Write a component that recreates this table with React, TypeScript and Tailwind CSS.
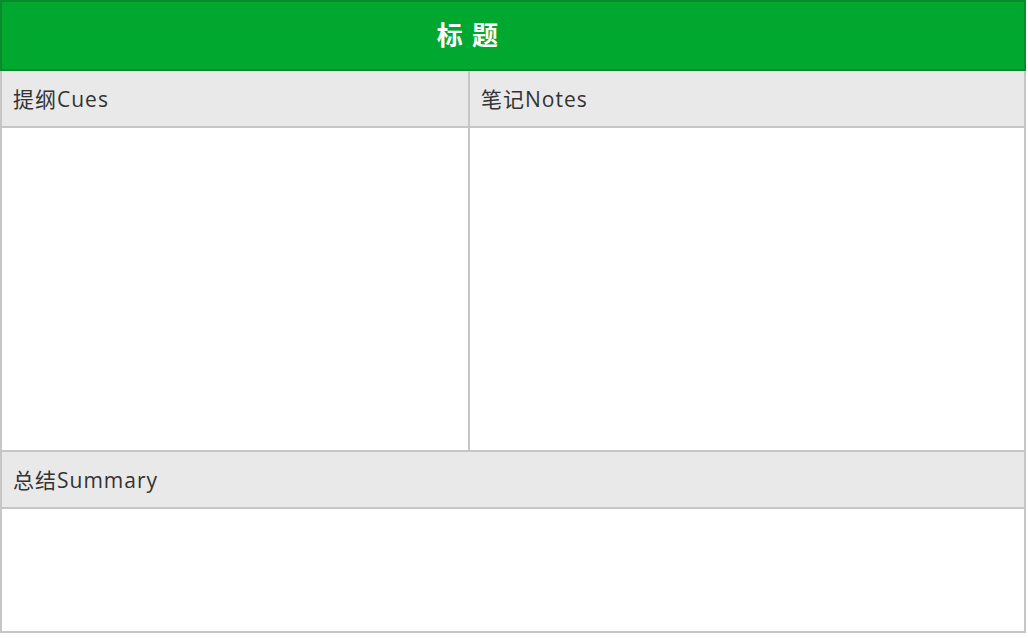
import React from 'react';

const font = { fontFamily: '"Open Sans", "Noto Sans CJK SC", sans-serif' };

const Cell: React.FC<{ label: string; bodyH: string; className?: string }> = ({ label, bodyH, className }) => (
  <div className={`flex flex-col ${className ?? ''}`}>
    <div className="h-[57px] bg-[#e9e9e9] border-b-2 border-[#c6c6c6] flex items-center px-[11px] pt-[2px] text-[21px] tracking-[1px] text-[#333]">
      {label}
    </div>
    <div className={`${bodyH} bg-white`}></div>
  </div>
);

const App: React.FC = () => {
  return (
    <div className="w-[1028px] h-[638px] bg-white" style={font}>
      <div className="w-[1026px] border-l-2 border-r-2 border-b-2 border-[#c6c6c6]">
        <div className="h-[71px] -mx-[2px] bg-[#00a82f] border-2 border-[#0a8a2c] flex items-center justify-center pr-[90px]">
          <span className="text-white text-[26px] font-bold tracking-[0.05em]">标 题</span>
        </div>
        <div className="flex">
          <Cell label="提纲Cues" bodyH="h-[322px]" className="w-[468px] border-r-2 border-[#c6c6c6]" />
          <Cell label="笔记Notes" bodyH="h-[322px]" className="flex-1" />
        </div>
        <div className="border-t-2 border-[#c6c6c6]">
          <Cell label="总结Summary" bodyH="h-[122px]" />
        </div>
      </div>
    </div>
  );
};

export default App;
